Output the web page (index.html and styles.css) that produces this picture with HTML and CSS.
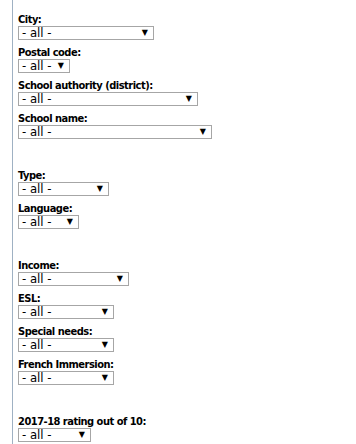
FILE: index.html
```html
<!DOCTYPE html>
<html lang="en">
<head>
    <meta charset="UTF-8">
    <title>School search</title>
    <link rel="stylesheet" href="styles.css">
</head>
<body>

    <div class="filters">

        <div class="group">
            <div class="field">
                <label>City:</label>
                <div class="picker w-city"><span>- all -</span><span class="arrow">&#9660;</span></div>
            </div>
            <div class="field">
                <label>Postal code:</label>
                <div class="picker w-postal"><span>- all -</span><span class="arrow">&#9660;</span></div>
            </div>
            <div class="field">
                <label>School authority (district):</label>
                <div class="picker w-authority"><span>- all -</span><span class="arrow">&#9660;</span></div>
            </div>
            <div class="field">
                <label>School name:</label>
                <div class="picker w-name"><span>- all -</span><span class="arrow">&#9660;</span></div>
            </div>
        </div>

        <div class="group">
            <div class="field">
                <label>Type:</label>
                <div class="picker w-type"><span>- all -</span><span class="arrow">&#9660;</span></div>
            </div>
            <div class="field">
                <label>Language:</label>
                <div class="picker w-lang"><span>- all -</span><span class="arrow">&#9660;</span></div>
            </div>
        </div>

        <div class="group">
            <div class="field">
                <label>Income:</label>
                <div class="picker w-income"><span>- all -</span><span class="arrow">&#9660;</span></div>
            </div>
            <div class="field">
                <label>ESL:</label>
                <div class="picker w-mid"><span>- all -</span><span class="arrow">&#9660;</span></div>
            </div>
            <div class="field">
                <label>Special needs:</label>
                <div class="picker w-mid"><span>- all -</span><span class="arrow">&#9660;</span></div>
            </div>
            <div class="field">
                <label>French Immersion:</label>
                <div class="picker w-mid"><span>- all -</span><span class="arrow">&#9660;</span></div>
            </div>
        </div>

        <div class="group">
            <div class="field">
                <label>2017-18 rating out of 10:</label>
                <div class="picker w-rating"><span>- all -</span><span class="arrow">&#9660;</span></div>
            </div>
        </div>

    </div>

</body>
</html>
```
FILE: styles.css
```css
* {
    margin: 0;
    padding: 0;
    box-sizing: border-box;
}

body {
    background-color: #ffffff;
    color: #000000;
    font-family: "DejaVu Sans Condensed", "DejaVu Sans", sans-serif;
    height: 444px;
    overflow: hidden;
}

.filters {
    margin-left: 12px;
    border-left: 1px solid #9fb1c3;
    padding-left: 5px;
    padding-top: 14px;
    min-height: 444px;
}

.group {
    margin-bottom: 31px;
}

.field {
    margin-bottom: 7px;
}

.field label {
    display: block;
    font-size: 11px;
    font-weight: bold;
    line-height: 12px;
    letter-spacing: -0.5px;
}

.picker {
    display: flex;
    align-items: center;
    justify-content: space-between;
    height: 14px;
    border: 1px solid #a6a6a6;
    background: #fff;
    font-size: 13px;
    line-height: 12px;
    padding: 0 5px 0 3px;
}

.picker .arrow {
    font-size: 8px;
    font-family: "DejaVu Sans", sans-serif;
}

.w-city { width: 136px; }
.w-postal { width: 52px; }
.w-authority { width: 180px; }
.w-name { width: 194px; }
.w-type { width: 91px; }
.w-lang { width: 61px; }
.w-income { width: 111px; }
.w-mid { width: 96px; }
.w-rating { width: 73px; }
```
